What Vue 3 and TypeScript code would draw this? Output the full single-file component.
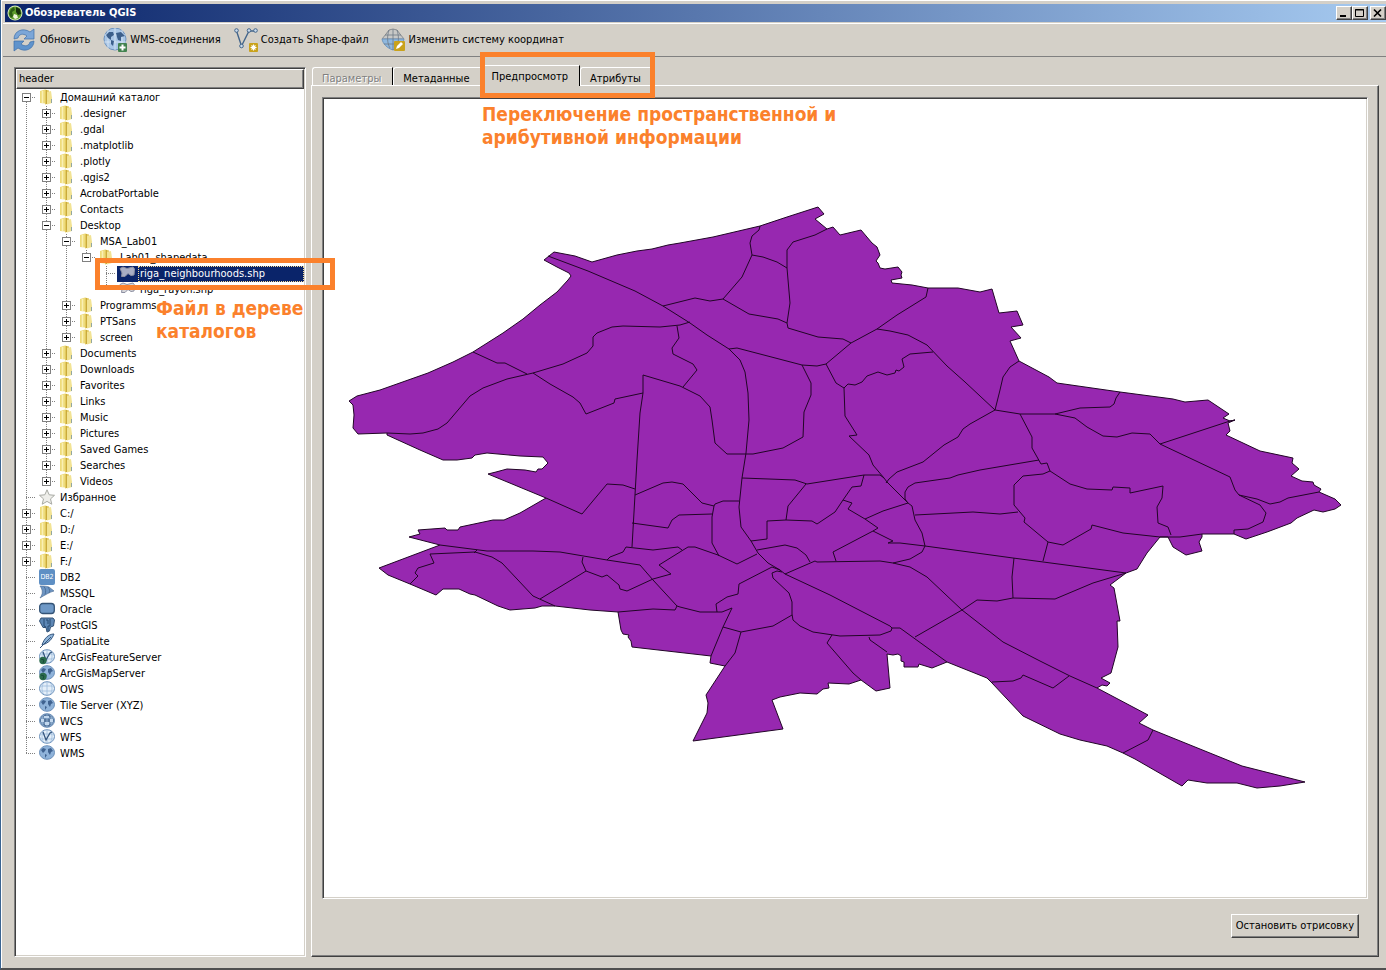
<script setup lang="ts">
import { computed, ref } from 'vue'

interface Item {
  label: string
  level: number
  icon: string
  box?: '+' | '-'
}

interface Row extends Item {
  guides: boolean[]
  first: boolean
  last: boolean
}

const folder = (label: string, level: number, box: '+' | '-' = '+'): Item => ({ label, level, icon: 'folder', box })
const leaf = (label: string, icon: string, level = 0): Item => ({ label, level, icon })

const items: Item[] = [
  folder('Домашний каталог', 0, '-'),
  ...['.designer', '.gdal', '.matplotlib', '.plotly', '.qgis2', 'AcrobatPortable', 'Contacts'].map((n) => folder(n, 1)),
  folder('Desktop', 1, '-'),
  folder('MSA_Lab01', 2, '-'),
  folder('Lab01_shapedata', 3, '-'),
  leaf('riga_neighbourhoods.shp', 'polygon', 4),
  leaf('riga_rayon.shp', 'polygon', 4),
  ...['Programms', 'PTSans', 'screen'].map((n) => folder(n, 2)),
  ...['Documents', 'Downloads', 'Favorites', 'Links', 'Music', 'Pictures', 'Saved Games', 'Searches', 'Videos'].map((n) => folder(n, 1)),
  leaf('Избранное', 'star'),
  ...['C:/', 'D:/', 'E:/', 'F:/'].map((n) => folder(n, 0)),
  leaf('DB2', 'db2'),
  leaf('MSSQL', 'mssql'),
  leaf('Oracle', 'oracle'),
  leaf('PostGIS', 'postgis'),
  leaf('SpatiaLite', 'feather'),
  leaf('ArcGisFeatureServer', 'arcfeature'),
  leaf('ArcGisMapServer', 'arcmap'),
  leaf('OWS', 'ows'),
  leaf('Tile Server (XYZ)', 'globe'),
  leaf('WCS', 'wcs'),
  leaf('WFS', 'wfs'),
  leaf('WMS', 'globe'),
]

function hasNext(from: number, level: number): boolean {
  for (let j = from + 1; j < items.length; j++) {
    if (items[j].level < level) return false
    if (items[j].level === level) return true
  }
  return false
}

const rows = computed<Row[]>(() =>
  items.map((it, i) => ({
    ...it,
    guides: Array.from({ length: it.level }, (_, k) => hasNext(i, k)),
    first: i === 0,
    last: !hasNext(i, it.level),
  })),
)

const selected = ref('riga_neighbourhoods.shp')
const activeTab = ref('Предпросмотр')
const tabs = [
  { label: 'Параметры', disabled: true },
  { label: 'Метаданные', disabled: false },
  { label: 'Предпросмотр', disabled: false },
  { label: 'Атрибуты', disabled: false },
]

const tools = [
  { label: 'Обновить', icon: 'refresh' },
  { label: 'WMS-соединения', icon: 'wms' },
  { label: 'Создать Shape-файл', icon: 'shape' },
  { label: 'Изменить систему координат', icon: 'crs' },
]

const outline =
  '349,401 357,396 380,390 428,373 453,362 473,352 503,333 523,319 540,305 557,292 568,280 571,276 569,273 557,267 544,260 554,252 575,256 592,262 617,255 637,251 652,249 668,245 680,243 713,237 760,226 787,217 818,207 824,214 815,219 827,229 833,227 840,235 861,230 872,243 877,247 880,255 876,261 878,263 880,268 885,269 898,267 902,272 901,275 902,278 891,280 892,283 912,285 928,288 958,288 980,292 992,289 999,313 1017,311 1023,325 1011,327 1021,338 1010,341 1019,361 1049,377 1057,383 1120,392 1173,399 1185,402 1208,400 1223,410 1229,414 1223,418 1230,421 1235,420 1228,423 1230,431 1226,435 1260,451 1293,458 1292,463 1299,469 1291,476 1302,481 1313,482 1314,485 1321,489 1319,492 1335,499 1341,505 1335,509 1323,512 1314,510 1297,518 1291,523 1267,532 1246,539 1234,534 1202,534 1202,537 1199,542 1202,551 1186,555 1173,547 1168,537 1160,537 1147,553 1137,569 1126,573 1110,585 1114,588 1120,621 1117,621 1118,647 1111,673 1101,678 1110,683 1107,686 1102,685 1097,688 1148,715 1139,723 1153,730 1242,766 1305,782 1280,786 1257,788 1237,783 1207,783 1188,780 1182,786 1135,759 1123,753 1107,746 1080,740 1060,734 1023,716 992,683 987,678 947,662 932,668 919,664 918,667 904,667 904,662 901,661 901,656 898,654 893,655 887,654 890,688 876,691 861,680 849,684 828,683 829,688 823,689 817,694 800,693 780,697 772,700 783,729 693,741 707,713 708,703 706,695 725,666 710,663 711,656 632,647 631,641 628,637 629,635 623,634 621,630 618,612 590,610 555,606 542,606 535,608 510,610 498,606 475,595 470,594 459,589 443,589 436,595 410,584 388,575 379,568 440,545 409,537 420,534 418,530 445,528 447,530 458,530 460,527 493,520 504,520 520,513 546,498 488,474 496,472 507,469 525,470 536,472 538,469 542,469 548,463 543,457 520,456 487,453 475,455 472,458 457,460 443,460 420,450 387,435 387,433 358,434 353,428 354,415 353,405'

const borders = [
  '548,256 588,271 635,291 663,306 690,323 707,335 729,349 740,360 745,372 748,393 749,420 746,453 742,478 739,507 741,527 751,541 758,553 768,563 780,570 785,574 830,595 890,626 892,628 891,631 880,635 840,636 813,632 800,626 793,620 792,614 792,602 789,593 773,578 772,573 777,571 782,572',
  '473,352 497,363 505,363 527,374',
  '387,433 410,434 423,433 438,429 447,423 470,396 483,388 507,379 533,373 563,364 587,353 593,346 593,337 597,333 612,327 623,326 660,327 680,325 690,322',
  '533,373 550,384 573,397 580,403 586,414 614,403 615,399 643,393',
  '643,375 643,393 640,413 637,460 632,547',
  '643,375 680,386 700,396 710,407 712,420 715,443 727,454 753,454 783,448 803,437 804,412 811,395 811,383 802,365',
  '677,326 679,338 672,348 673,354 693,364 697,370 683,387',
  '663,306 695,298 710,301 723,299 742,277 752,255 750,243 752,236 759,230 760,226',
  '752,255 763,257 777,262 787,268',
  '827,229 815,235 793,242 787,250 787,268 790,303 787,323 788,328 818,337 843,339 851,343',
  '723,299 749,314 778,319 787,323',
  '729,349 737,348 802,365 817,366 826,364 851,343 877,329 897,315 926,297 928,288',
  '877,329 890,331 908,335 927,345 947,366 965,382 995,410',
  '826,364 836,383 844,388 845,416 857,435 849,436 869,455 873,465 884,478 887,482 908,503 912,506 915,520 922,533 925,546 922,552 910,559 893,563',
  '844,388 848,384 855,385 862,382 867,376 878,372 887,375 895,373 896,370 899,371 904,367 902,359 910,354 933,352',
  '995,410 970,424 963,429 958,437 944,445 923,462 897,472 889,479 886,483',
  '1019,361 1010,367 1003,377 1000,390 995,410',
  '995,410 1020,414 1055,414 1080,408 1110,407 1114,404 1116,398 1120,392',
  '1055,414 1075,418 1087,427 1103,436 1117,437 1132,433 1150,434 1160,444 1230,477 1235,490 1239,495 1260,505 1266,513 1263,522 1248,529 1234,530 1234,534',
  '1160,444 1230,421 1235,420',
  '1239,495 1257,499 1270,504 1280,502 1288,498 1319,492',
  '1020,414 1032,437 1032,448 1041,464 1047,463 1050,471 1070,484 1087,489 1112,490 1113,487 1130,488 1130,493 1163,486 1162,498 1157,507 1158,523 1168,527 1171,535',
  '1039,460 980,470 958,475 950,478 915,483 908,487 905,492 905,499 908,503',
  '1050,471 1043,474 1023,476 1014,485 1014,505 1025,518 1024,522 1048,542 1063,545 1091,529 1092,525 1123,533 1160,537 1180,537 1202,534',
  '1048,542 1043,561',
  '915,515 973,512 1000,514 1018,512',
  '888,543 900,543 925,546 1013,558 1126,573',
  '888,543 893,541 873,531 878,528 865,519 848,509 852,503 843,500 852,487 861,486 864,475',
  '742,478 795,480 807,484 864,475 880,475 884,478',
  '806,484 788,506 786,520',
  '751,541 767,539 767,521 786,520 812,521 817,524 835,512 843,500',
  '865,519 883,511 908,503',
  '873,531 833,552 836,561',
  '757,550 785,545 797,548 806,555 810,562',
  '785,574 815,561 817,562 880,561 893,563 910,567 927,577 962,610 1003,642 1040,661 1070,676 1097,688',
  '915,637 962,610 977,600 997,601 1013,598 1055,599 1093,583 1126,573',
  '1014,558 1012,577 1013,598',
  '892,628 900,628 947,662',
  '992,682 1013,681 1021,678 1023,675 1053,688 1069,676',
  '1153,730 1148,740 1123,753',
  '869,637 870,640 887,652',
  '832,635 827,643 853,673 861,680',
  '792,615 773,626 741,632 723,627',
  '741,632 735,653 725,666',
  '711,656 723,627 732,608 722,612 700,612 680,607 677,606 653,580 640,565 607,560 560,552 533,551 487,551 440,545',
  '618,612 653,609 675,610 677,606',
  '430,554 475,552 492,557 502,563 533,596 555,606',
  '477,550 474,553',
  '430,554 434,563 418,568 415,573 418,576 410,584',
  '540,599 586,571 582,562 583,557',
  '586,571 602,577 607,575 619,585 620,589 627,591 653,579 671,574 659,565 688,547 695,547 718,555 737,564 757,554',
  '607,560 610,557 623,552 626,547 653,550 678,547 682,550',
  '632,523 668,528 672,520 679,515 712,514',
  '635,495 663,483 672,482 683,484 702,503 714,506 715,504 723,501 739,501',
  '714,506 712,517 712,543 719,556',
  '546,498 582,514 607,484 623,485 635,489',
  '780,570 772,567 739,584 738,594 727,597 716,604 717,612',
]
</script>

<template>
  <div class="window">
    <header class="titlebar">
      <svg class="logo" viewBox="0 0 16 16" aria-hidden="true">
        <circle cx="8" cy="8" r="7.5" fill="#dcebc0" />
        <circle cx="8" cy="8" r="6.6" fill="#5d9c2c" />
        <path d="M2 9 4 4l3-2 1 3-3 2 1 4-2 2z" fill="#2b5c14" />
        <path d="m9 2 4 2 1 5-3 1-2-3z" fill="#16300c" />
        <path d="m7 9 3 1 1 3-3 1-2-2z" fill="#f0f6dc" />
      </svg>
      <h1>Обозреватель QGIS</h1>
      <div class="controls">
        <button type="button" aria-label="Свернуть">
          <svg viewBox="0 0 12 10"><path d="M2 8h6" stroke="#000" stroke-width="2" /></svg>
        </button>
        <button type="button" aria-label="Развернуть">
          <svg viewBox="0 0 12 10"><path d="M1.500 1.500h8v7h-8zM1 2h9" fill="none" stroke="#000" /></svg>
        </button>
        <button type="button" class="close" aria-label="Закрыть">
          <svg viewBox="0 0 12 10"><path d="m2 1.500 7 7m0-7-7 7" stroke="#000" stroke-width="1.700" /></svg>
        </button>
      </div>
    </header>

    <nav class="toolbar" aria-label="Панель инструментов">
      <button v-for="t in tools" :key="t.icon" type="button">
        <svg viewBox="0 0 24 24" aria-hidden="true">
          <g v-if="t.icon === 'refresh'" stroke="#3d6fa8" stroke-width=".7">
            <path d="M1 11C1 3 10-1 17 4l4-3v10H11l3-3C10 5 6 6 5 10z" fill="#7ba6d8" />
            <path d="M21 13c0 8-9 12-16 7l-4 3V13h10l-3 3c4 3 8 2 9-2z" fill="#5f93cc" />
          </g>
          <g v-else-if="t.icon === 'wms'">
            <circle cx="12" cy="11" r="11" fill="#a9c6e6" stroke="#6e93be" />
            <path d="M5 1.500v19M12 0v22M19 2v18M1 7h22M1 14h22" stroke="#d9e7f5" stroke-width=".8" />
            <path d="m3 7 3-3 4 0 1 3-3 2 0 3-3-2zM13 5l5-1 4 4-4 1 0 4-3-1-1-3zM8 12l3 1-1 5-2-2z" fill="#3c5f8b" />
            <rect x="15" y="15" width="9" height="9" rx="1" fill="#438350" />
            <path d="M19.500 16.500v6m-3-3h6" stroke="#fff" stroke-width="2" />
          </g>
          <g v-else-if="t.icon === 'shape'">
            <path d="m2.500 3 5 15L15 3h6" fill="none" stroke="#43658b" stroke-width="1.400" />
            <g fill="#cbdced" stroke="#43658b">
              <circle cx="2.500" cy="2.500" r="1.800" /><circle cx="7.500" cy="18" r="1.800" />
              <circle cx="15" cy="2.500" r="1.800" /><circle cx="21.500" cy="2.500" r="1.800" />
            </g>
            <rect x="15" y="15" width="9" height="9" rx="1" fill="#c9a21c" />
            <path d="M19.500 16.500v6m-3-3h6m-5-2 4 4m0-4-4 4" stroke="#fff" stroke-width="1.100" />
          </g>
          <g v-else>
            <path d="M5 6 8 2l4-1 4 1 3 4 4 5H1z" fill="#c8c8c6" stroke="#8a8d90" />
            <path d="M1 11h22c-1 5-5 9-11 11C6 20 2 16 1 11z" fill="#8fb8df" stroke="#6f95bd" />
            <path d="M12 1v21M8 2C6 8 6 15 9 20M16 2c2 6 2 13-1 18M4 7h16M3 16h18" fill="none" stroke="#6d7985" stroke-width=".8" />
            <rect x="13" y="13" width="11" height="10" rx="1" fill="#c9a21c" />
            <path d="m15 21 1-3 4-4 2 2-4 4z" fill="#fff" />
          </g>
        </svg>
        <span>{{ t.label }}</span>
      </button>
    </nav>

    <main class="content">
      <aside class="browser">
        <div class="tree">
          <div class="tree-header">header</div>
          <ul role="tree" aria-label="header">
            <li
              v-for="row in rows"
              :key="row.label"
              class="row"
              role="treeitem"
              :aria-selected="row.label === selected"
              @click="selected = row.label"
            >
              <span v-for="(g, k) in row.guides" :key="k" class="cell" :class="{ line: g }" />
              <span class="cell branch" :class="{ first: row.first, last: row.last }">
                <button v-if="row.box" type="button" class="box" :aria-label="row.label">
                  <svg viewBox="0 0 9 9">
                    <rect x=".5" y=".5" width="8" height="8" fill="#fff" stroke="#808080" />
                    <path d="M2 4.500h5" stroke="#000" />
                    <path v-if="row.box === '+'" d="M4.500 2v5" stroke="#000" />
                  </svg>
                </button>
              </span>
              <span class="entry" :class="{ selected: row.label === selected }">
                <svg class="icon" viewBox="0 0 16 16" aria-hidden="true">
                  <g v-if="row.icon === 'folder'">
                    <path d="M1 2 6 .5v14l-5-.5z" fill="#eedb7c" />
                    <path d="M6 .5 10 1.500v13l-4 1z" fill="#e3ca5e" />
                    <path d="M8 3 12 2l1 7v5l-5 1.500z" fill="#f2e394" />
                    <path d="M3.500 2v12" stroke="#faf0b4" stroke-width="1.500" />
                    <path d="M7.500 1v14" stroke="#c9aa3c" />
                    <path d="M12.500 10v4" stroke="#93a7a0" />
                  </g>
                  <path v-else-if="row.icon === 'polygon'" d="M1 3.500 4 2l4 1.500L14 2l1.500 2-.5 6-3 .5-3-2-3 3H2.500L3 8z" :fill="row.label === selected ? '#a9aec4' : '#d6d6da'" stroke="#8d90a2" />
                  <path v-else-if="row.icon === 'star'" d="m8 .8 2.200 5 5.300.5-4 3.600 1.300 5.300L8 12.400l-4.800 2.800 1.300-5.300-4-3.600 5.300-.5z" fill="#eeeeea" stroke="#a8aaa4" />
                  <g v-else-if="row.icon === 'db2'">
                    <rect width="16" height="16" rx="2" fill="#5e8fc4" />
                    <text x="8" y="10" font-size="7" text-anchor="middle" fill="#fff">DB2</text>
                  </g>
                  <g v-else-if="row.icon === 'mssql'" stroke="#4a6a90" stroke-width=".6">
                    <path d="M1 1c4 0 6 0 9 1l5 4c-4 1-9 4-14 7 3-4 3-8 0-12z" fill="#6d95c3" />
                    <path d="M5 1.500c2 3 2 5 1 8M9 2c2 3 2 4 1 6" fill="none" stroke="#34557d" />
                  </g>
                  <rect v-else-if="row.icon === 'oracle'" x=".7" y="2.500" width="14.600" height="10" rx="3" fill="#6e98c6" stroke="#345376" stroke-width="1.300" />
                  <g v-else-if="row.icon === 'postgis'">
                    <path d="M2 1h12l1.500 2-1 6-3 1-1 4-2.500 1-1-4.500-3 0L.5 4z" fill="#5d87b5" stroke="#345376" />
                    <path d="M5 2v7l2 1M11 2v7H9v5M7 3h2v4" fill="none" stroke="#294a70" />
                  </g>
                  <g v-else-if="row.icon === 'feather'">
                    <path d="M3 12C5 6 9 1 15 1c-2 5-5 9-12 11z" fill="#8fb5da" stroke="#34557d" />
                    <path d="M1 15 12 4" stroke="#34557d" />
                  </g>
                  <g v-else>
                    <ellipse cx="8" cy="7.500" rx="7.500" ry="6.800" :fill="row.icon === 'wcs' ? '#56779e' : row.icon === 'globe' || row.icon === 'arcmap' ? '#8fb3da' : '#e4eff9'" stroke="#6b90ba" />
                    <path v-if="row.icon !== 'globe' && row.icon !== 'arcmap'" d="M8 1v13M4.500 2c-2 3-2 8 0 11M11.500 2c2 3 2 8 0 11M1 5h14M1 10h14" fill="none" stroke="#9dbbdc" stroke-width=".8" />
                    <path v-if="row.icon === 'globe' || row.icon === 'arcmap'" d="m2 5 2-2 3 1-1 2-2 2zM9 4l3-1 2 3-2 1-1 3-2-3zM6 9l2 1-2 3z" fill="#3f6290" />
                    <path v-if="row.icon === 'wcs'" d="M5 3h5v2H5zM2 6h3v3H2zM11 6h3v3h-3zM6 9h4v3H6z" fill="#c2d8ee" />
                    <path v-if="row.icon === 'wfs' || row.icon === 'arcfeature'" d="m4 3 3 8 4-7 2-1" fill="none" stroke="#34557d" stroke-width="1.300" />
                    <g v-if="row.icon === 'arcmap' || row.icon === 'arcfeature'">
                      <circle cx="4" cy="11.500" r="3.700" fill="#2b6b4c" />
                      <path d="m2 10 3 1-1 3" fill="none" stroke="#174a3a" />
                    </g>
                  </g>
                </svg>
                <span class="label">{{ row.label }}</span>
              </span>
            </li>
          </ul>
        </div>
        <div class="mark mark-file" />
        <p class="note note-file">Файл в дереве каталогов</p>
      </aside>

      <section class="pages">
        <div class="tabs" role="tablist">
          <button
            v-for="tab in tabs"
            :key="tab.label"
            type="button"
            role="tab"
            :disabled="tab.disabled"
            :aria-selected="tab.label === activeTab"
            :class="{ active: tab.label === activeTab }"
            @click="activeTab = tab.label"
          >
            {{ tab.label }}
          </button>
        </div>
        <div class="panel">
          <div class="canvas">
            <svg viewBox="324 99 1042 798" role="img" aria-label="riga_neighbourhoods">
              <g stroke="#210526" stroke-linejoin="round">
                <polygon :points="outline" fill="#9728b0" />
                <polyline v-for="(b, i) in borders" :key="i" :points="b" fill="none" />
              </g>
            </svg>
          </div>
          <div class="actions">
            <button type="button" class="stop">Остановить отрисовку</button>
          </div>
        </div>
        <div class="mark mark-tabs" />
        <p class="note note-tabs">Переключение пространственной и<br />арибутивной информации</p>
      </section>
    </main>
  </div>
</template>

<style>
body {
  margin: 0;
}
</style>

<style scoped>
* {
  box-sizing: border-box;
}

.window {
  display: flex;
  flex-direction: column;
  min-height: 100vh;
  padding: 2px 0 0 2px;
  background: #d4d0c8;
  border-left: 1px solid #3a6491;
  border-bottom: 2px solid #505050;
  box-shadow: inset 1px 1px #fff;
  font: 11px/16px Tahoma, "DejaVu Sans Condensed", "DejaVu Sans", sans-serif;
  color: #000;
  overflow: hidden;
}

button {
  font: inherit;
  color: inherit;
  padding: 0;
  border: 0;
  background: none;
}

.titlebar {
  display: flex;
  align-items: center;
  gap: 2px;
  height: 19px;
  margin: 2px 0 0 2px;
  padding-left: 2px;
  background: linear-gradient(90deg, #0a246a, #a6caf0);
  border-bottom: 1px solid #d4d0c8;
}

.logo {
  width: 16px;
  height: 16px;
}

h1 {
  flex: 1;
  margin: 0;
  font: bold 11px/16px Tahoma, "DejaVu Sans Condensed", "DejaVu Sans", sans-serif;
  color: #fff;
}

.controls {
  display: flex;
}

.controls button {
  display: flex;
  width: 16px;
  height: 14px;
  padding: 1px;
  background: #d4d0c8;
  border: 1px solid;
  border-color: #fff #404040 #404040 #fff;
  box-shadow: inset -1px -1px #808080;
}

.controls .close {
  margin-left: 2px;
}

.controls svg {
  width: 12px;
  height: 10px;
}

.toolbar {
  display: flex;
  gap: 13px;
  height: 34px;
  padding: 0 10px;
  border-top: 1px solid #fff;
  border-bottom: 1px solid #808080;
}

.toolbar button {
  display: flex;
  align-items: center;
  gap: 3px;
}

.toolbar svg {
  width: 24px;
  height: 24px;
}

.content {
  flex: 1;
  display: flex;
  gap: 5px;
  padding: 10px 7px 11px 11px;
}

.browser {
  position: relative;
  flex: 0 0 292px;
  display: flex;
}

.tree {
  flex: 1;
  min-width: 0;
  background: #fff;
  border: 1px solid;
  border-color: #808080 #fff #fff #808080;
  box-shadow: inset 1px 1px #404040, inset -1px -1px #d4d0c8;
  padding: 1px;
}

.tree-header {
  height: 20px;
  padding: 1px 2px;
  background: #d4d0c8;
  border: 1px solid;
  border-color: #fff #404040 #404040 #fff;
  box-shadow: inset -1px -1px #808080;
}

ul {
  list-style: none;
  margin: 0;
  padding: 1px 0 0 1px;
}

.row {
  display: flex;
  height: 16px;
}

.cell {
  position: relative;
  flex: 0 0 20px;
  height: 16px;
}

.line {
  background: repeating-linear-gradient(#808080 0 1px, transparent 1px 2px) 9px 0 / 1px 100% no-repeat;
}

.branch {
  background:
    repeating-linear-gradient(#808080 0 1px, transparent 1px 2px) 9px 0 / 1px 100% no-repeat,
    repeating-linear-gradient(90deg, #808080 0 1px, transparent 1px 2px) 9px 7px / 10px 1px no-repeat;
}

.branch.last {
  background-size: 1px 8px, 10px 1px;
}

.branch.first {
  background-position: 9px 8px, 9px 7px;
}

.box {
  position: absolute;
  left: 5px;
  top: 3px;
  width: 9px;
  height: 9px;
}

.box svg {
  display: block;
  width: 9px;
  height: 9px;
}

.entry {
  display: flex;
  flex: 1;
  min-width: 0;
}

.icon {
  flex: none;
  width: 16px;
  height: 16px;
  margin: -1px 3px 0 2px;
}

.label {
  flex: 1;
  padding-left: 2px;
  line-height: 16px;
  white-space: nowrap;
}

.selected {
  background: #0a246a;
  color: #fff;
}

.selected .label {
  outline: 1px dotted #f5db95;
  outline-offset: -1px;
}

.pages {
  position: relative;
  flex: 1;
  min-width: 0;
  display: flex;
  flex-direction: column;
}

.tabs {
  display: flex;
  align-items: flex-end;
  height: 19px;
  padding-left: 1px;
  margin-top: -1px;
}

.tabs button {
  height: 18px;
  padding: 3px 11px 0 9px;
  border: 1px solid;
  border-color: #fff #000 transparent #fff;
  border-bottom: 0;
  border-radius: 3px 0 0 0;
  white-space: nowrap;
}

.tabs button:disabled {
  color: #808080;
  text-shadow: 1px 1px #fff;
}

.tabs .active {
  position: relative;
  z-index: 1;
  height: 21px;
  padding-top: 2px;
  margin-bottom: -1px;
  background: #d4d0c8;
}

.panel {
  flex: 1;
  display: flex;
  flex-direction: column;
  padding: 11px 10px 18px;
  border: 1px solid;
  border-color: #fff #404040 #404040 #fff;
  box-shadow: inset -1px -1px #808080;
}

.canvas {
  flex: 1;
  display: flex;
  flex-direction: column;
  background: #fff;
  border: 1px solid;
  border-color: #808080 #fff #fff #808080;
  box-shadow: inset 1px 1px #404040, inset -1px -1px #d4d0c8;
  padding: 1px;
}

.canvas svg {
  flex: 1 1 0;
  min-height: 0;
  width: 100%;
}

.actions {
  display: flex;
  justify-content: flex-end;
  padding: 15px 9px 0;
}

.stop {
  height: 24px;
  padding: 0 4px;
  border: 1px solid;
  border-color: #fff #404040 #404040 #fff;
  box-shadow: inset -1px -1px #808080;
}

.mark {
  position: absolute;
  border: 5px solid #fb812c;
  pointer-events: none;
}

.mark-file {
  left: 81px;
  top: 191px;
  width: 240px;
  height: 32px;
  z-index: 2;
}

.mark-tabs {
  left: 169px;
  top: -15px;
  width: 175px;
  height: 46px;
  z-index: 2;
}

.note {
  position: absolute;
  margin: 0;
  font: bold 19px/23px Tahoma, "DejaVu Sans Condensed", "DejaVu Sans", sans-serif;
  color: #fb812c;
}

.note-file {
  left: 142px;
  top: 230px;
  width: 160px;
}

.note-tabs {
  left: 171px;
  top: 36px;
  white-space: nowrap;
}
</style>
